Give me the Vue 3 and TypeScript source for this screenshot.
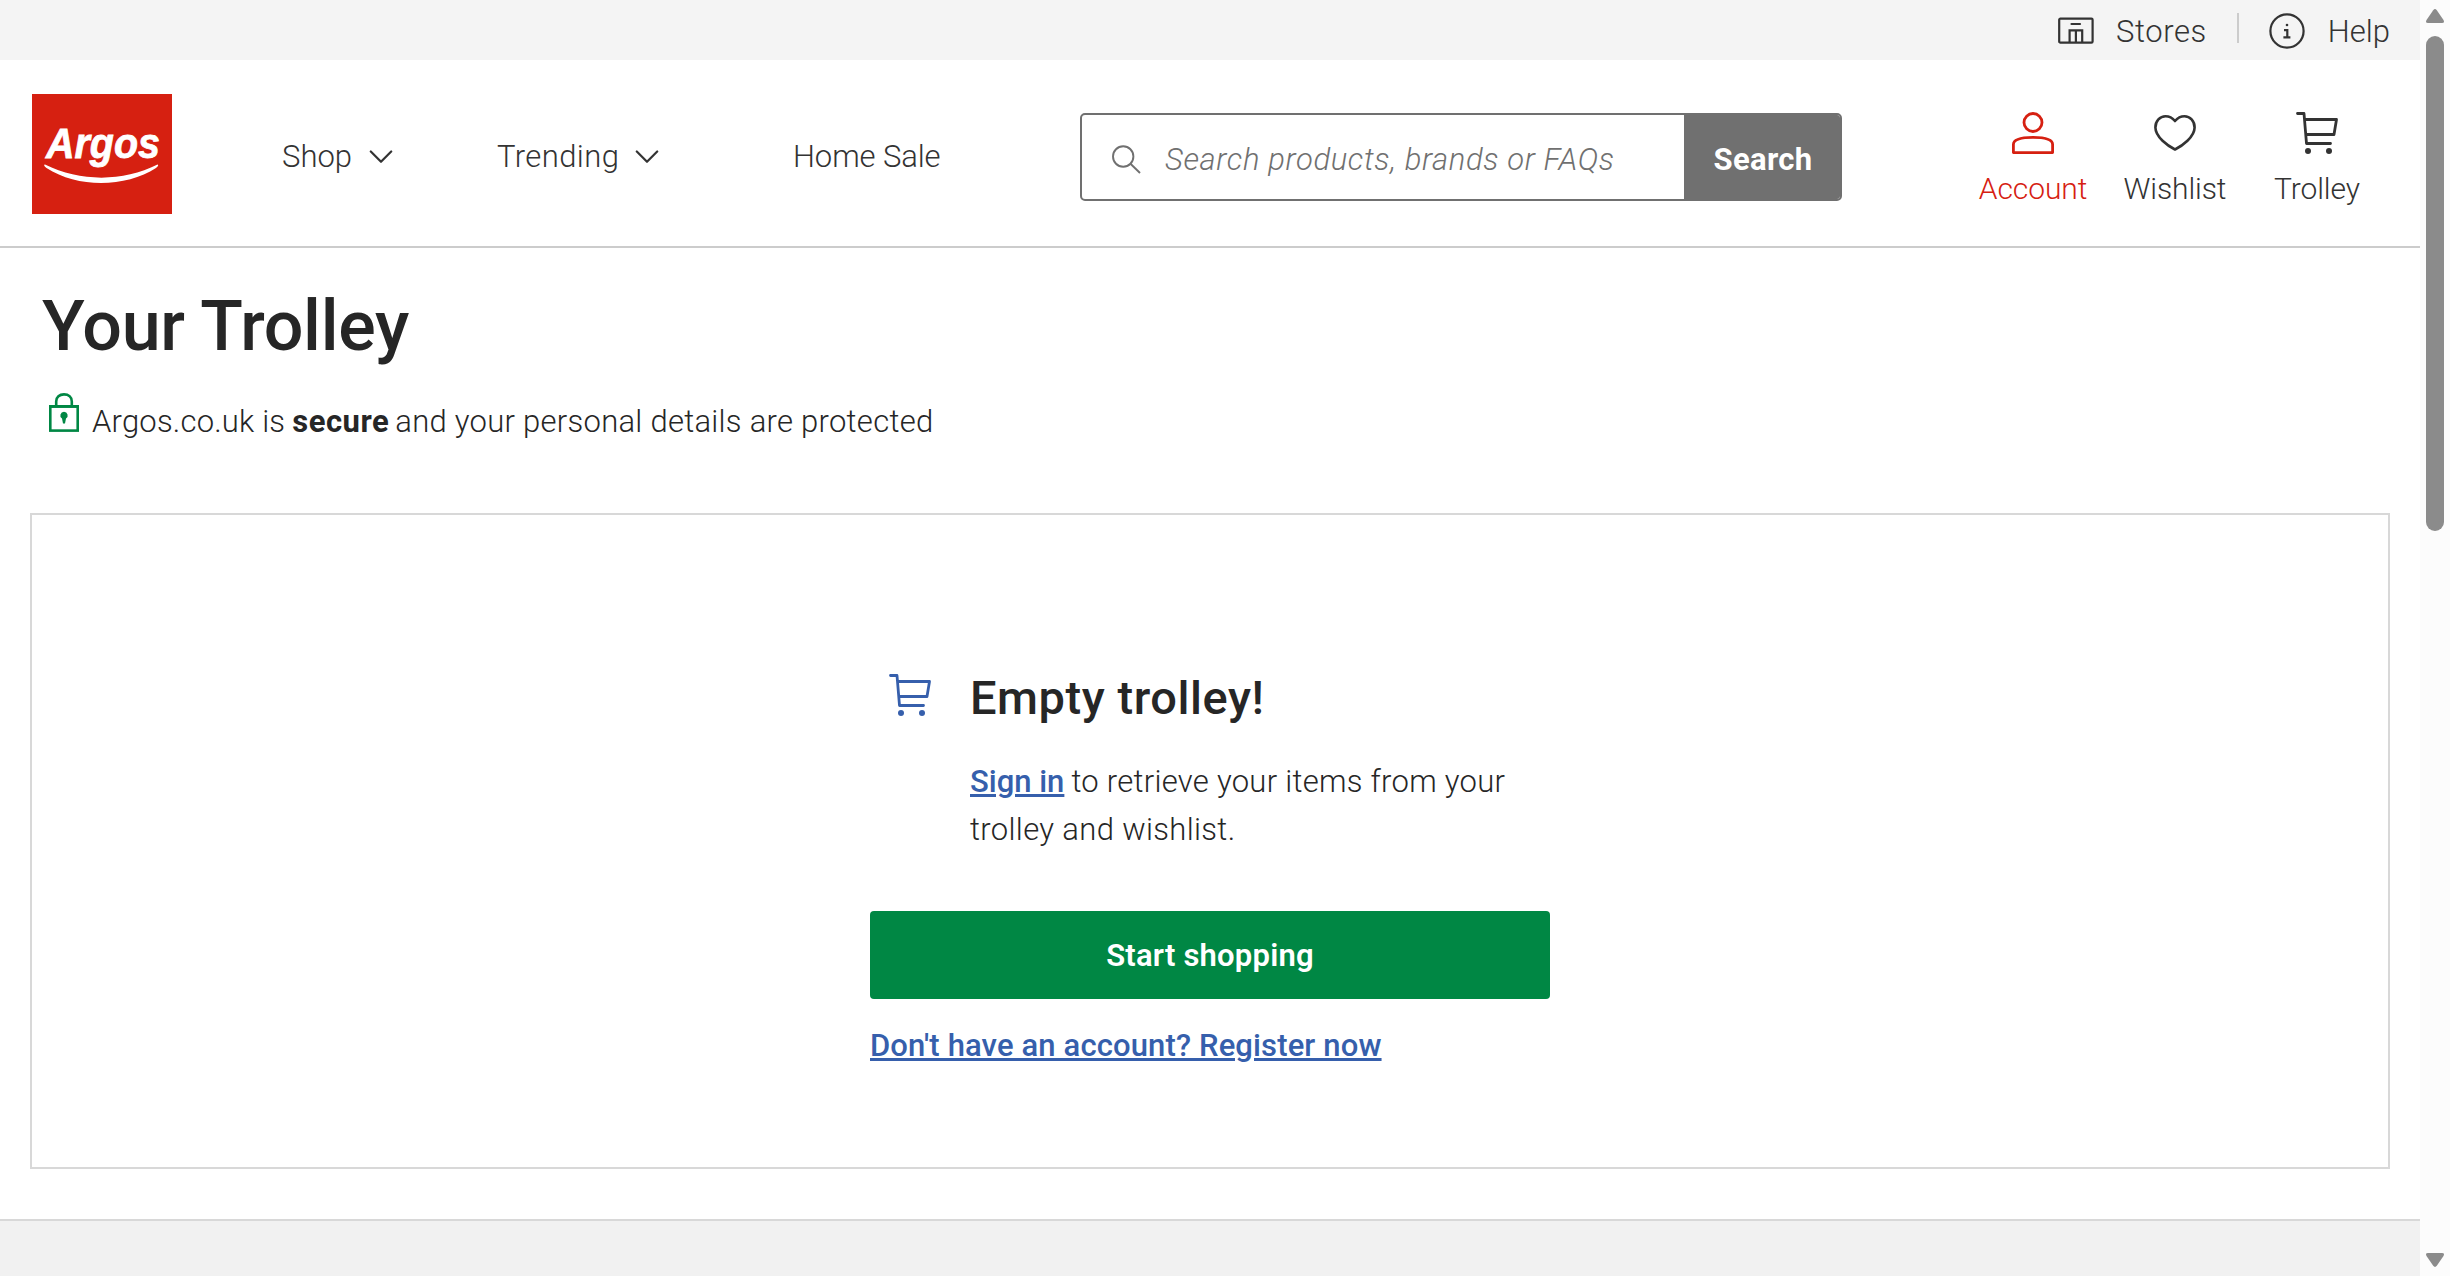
<script setup lang="ts">
interface NavItem { label: string; menu: boolean; cls: string }

const navItems: NavItem[] = [
  { label: 'Shop', menu: true, cls: 'shop' },
  { label: 'Trending', menu: true, cls: 'trending' },
  { label: 'Home Sale', menu: false, cls: 'sale' },
]
</script>

<template>
  <div class="window">
    <div class="page">
      <div class="utility">
        <a class="util stores">
          <svg width="36" height="28" viewBox="0 0 36 28" fill="none" stroke="currentColor" stroke-width="2.2">
            <rect x="1.2" y="1.6" width="33.4" height="24" rx="1.2" />
            <path d="M13.5 7H22" stroke-linecap="round" />
            <path d="M11.6 25V13.4H24.2V25M17.9 13.4V25" />
          </svg>
          <span class="t">Stores</span>
        </a>
        <i class="divider"></i>
        <a class="util help">
          <svg width="36" height="36" viewBox="0 0 36 36" fill="none" stroke="currentColor" stroke-width="2.2">
            <circle cx="18" cy="18" r="16.6" />
            <path d="M15 17.2H18.3V24.2M14.4 24.4H21.4" />
            <circle cx="18" cy="12" r="1.3" fill="currentColor" stroke="none" />
          </svg>
          <span class="t">Help</span>
        </a>
      </div>

      <header class="header">
        <a class="logo">
          <svg width="140" height="120" viewBox="0 0 140 120">
            <rect width="140" height="120" fill="#d62011" />
            <text x="14" y="64" textLength="114" lengthAdjust="spacingAndGlyphs" font-size="43" fill="#fff" stroke="#fff" stroke-width=".8">Argos</text>
            <path d="M13 70.6C48 88 91 88 125.500 70.600C127 71.500 125.500 73 124 74C94 93.500 46 94.500 14.500 74C12 72.500 11.500 70.500 13 70.600Z" fill="#fff" />
          </svg>
        </a>
        <nav class="nav">
          <a v-for="n in navItems" :key="n.label" class="nav-item" :class="n.cls">
            <span class="t">{{ n.label }}</span>
            <svg v-if="n.menu" width="24" height="14" viewBox="0 0 24 14" fill="none" stroke="currentColor" stroke-width="2.2" stroke-linecap="round" stroke-linejoin="round"><path d="M1.800 1.500L12 11.800L22.200 1.500" /></svg>
          </a>
        </nav>
        <div class="search">
          <svg width="30" height="30" viewBox="0 0 30 30" fill="none" stroke="#707070" stroke-width="1.900"><circle cx="11.200" cy="11.500" r="10.200" /><path d="M18.500 18.800L28 28" /></svg>
          <span class="t placeholder">Search products, brands or FAQs</span>
          <button class="search-btn"><span class="t">Search</span></button>
        </div>
        <div class="actions">
          <a class="action account">
            <svg width="42" height="42" viewBox="0 0 42 42" fill="none" stroke="currentColor" stroke-width="2.800" stroke-linejoin="round"><circle cx="21" cy="10.500" r="9" /><path d="M1.400 40.600V32.500C1.400 28.500 7 25.400 21 25.400S40.600 28.500 40.600 32.500V40.600Z" /></svg>
            <span class="t">Account</span>
          </a>
          <a class="action wishlist">
            <svg width="42" height="42" viewBox="0 -3 42 42" fill="none" stroke="currentColor" stroke-width="2.600" stroke-linejoin="round"><path d="M21 34.500C14 31 1.400 22 1.400 12.500C1.400 6 6 1.300 11.500 1.300C15.500 1.300 18.500 3 21 6C23.500 3 26.500 1.300 30.500 1.300C36 1.300 40.600 6 40.600 12.500C40.600 22 28 31 21 34.500Z" /></svg>
            <span class="t">Wishlist</span>
          </a>
          <a class="action trolley">
            <svg width="42" height="42" viewBox="0 0 42 42" fill="none" stroke="currentColor" stroke-width="2.800" stroke-linejoin="round" stroke-linecap="round"><path d="M1.500 1.500H8L10.500 31.500H34.500M8.600 7.500H40.500L38 22.500H9.800" /><g fill="currentColor" stroke="none"><circle cx="12" cy="39" r="3" /><circle cx="33" cy="39" r="3" /></g></svg>
            <span class="t">Trolley</span>
          </a>
        </div>
      </header>

      <main class="main">
        <h1><span class="t">Your Trolley</span></h1>
        <p class="secure">
          <svg width="30" height="39" viewBox="0 0 30 39" fill="none" stroke="#008744" stroke-width="2.600"><path d="M7.200 13V8.500C7.200 4 10.500 1.400 15 1.400S22.800 4 22.800 8.500V13" /><rect x="1.300" y="13.300" width="27.400" height="24.300" /><path d="M0 13.600H30" /><path d="M15 18.800a3.700 3.700 0 0 1 2 6.800l-1 5h-2l-1-5a3.700 3.700 0 0 1 2-6.800Z" fill="#008744" stroke="none" /></svg>
          <span class="t s1">Argos.co.uk is</span><strong class="t s2">secure</strong><span class="t s3">and your personal details are protected</span>
        </p>
        <section class="card">
          <div class="empty">
            <div class="empty-row">
              <svg width="42" height="42" viewBox="0 0 42 42" fill="none" stroke="currentColor" stroke-width="2.800" stroke-linejoin="round" stroke-linecap="round"><path d="M1.500 1.500H8L10.500 31.500H34.500M8.600 7.500H40.500L38 22.500H9.800" /><g fill="currentColor" stroke="none"><circle cx="12" cy="39" r="3" /><circle cx="33" cy="39" r="3" /></g></svg>
              <div class="copy">
                <h2><span class="t">Empty trolley!</span></h2>
                <p><a class="link t">Sign in</a><span class="t c1">to retrieve your items from your</span></p>
                <p><span class="t c2">trolley and wishlist.</span></p>
              </div>
            </div>
            <button class="start"><span class="t">Start shopping</span></button>
            <a class="link register t">Don't have an account? Register now</a>
          </div>
        </section>
      </main>
      <footer class="footer"></footer>
    </div>
    <div class="scrollbar">
      <svg width="18" height="14" viewBox="0 0 18 14" fill="#8b8b8b"><path d="M7.200 1.200Q9-1 10.800 1.200L17.500 11Q19 14 16 14H2Q-1 14 .5 11Z" /></svg>
      <i class="thumb"></i>
      <svg width="18" height="14" viewBox="0 0 18 14" fill="#8b8b8b"><path d="M7.200 12.800Q9 15 10.800 12.800L17.500 3Q19 0 16 0H2Q-1 0 .5 3Z" /></svg>
    </div>
  </div>
</template>

<style>
body { margin: 0; background: #fff; overflow: hidden; }
</style>

<style scoped>
.window { display: flex; width: 2450px; height: 1276px; overflow: hidden; font-family: Roboto, "Liberation Sans", sans-serif; font-size: 31px; font-weight: 300; color: #333; }
.window *, .window { box-sizing: border-box; }
h1, h2, p { margin: 0; }
svg { display: block; flex: none; }
.t { display: block; flex: none; white-space: nowrap; }
.page { flex: none; width: 2420px; display: flex; flex-direction: column; }
.utility { height: 60px; flex: none; background: #f4f4f4; display: flex; justify-content: flex-end; align-items: flex-start; padding: 13px 30px 0 0; }
.util { display: flex; line-height: 37px; }
.stores { letter-spacing: .6px; }
.stores svg { margin: 4px 22px 0 0; }
.divider { width: 2px; height: 30px; margin: 0 30px; background: #ccc; }
.help svg { margin-right: 23px; }
.header { height: 188px; flex: none; border-bottom: 2px solid #ccc; display: flex; align-items: flex-start; }
.logo { margin: 34px 0 0 32px; }
.logo text { font-family: "Liberation Sans", Arial, sans-serif; font-weight: 700; font-style: italic; }
.nav { display: flex; margin: 78px 0 0 110px; line-height: 37px; }
.nav-item { display: flex; }
.nav-item svg { margin: 12px 0 0 auto; }
.shop { width: 111px; }
.trending { width: 162px; margin-left: 104px; letter-spacing: .4px; }
.sale { width: 287px; margin-left: 134px; letter-spacing: -.1px; }
.search { width: 762px; height: 88px; margin-top: 53px; border: 2px solid #707070; border-radius: 5px; display: flex; overflow: hidden; }
.search svg { margin: 30px 23px 0 30px; }
.placeholder { width: 519px; color: #707070; font-style: italic; line-height: 89px; letter-spacing: .62px; }
.search-btn { border: 0; flex: 1; background: #707070; color: #fff; font: 700 31px/89px Roboto, sans-serif; letter-spacing: .3px; padding: 0 0 0 2px; display: flex; justify-content: center; }
.actions { display: flex; margin-left: 120px; padding-top: 52px; }
.action { width: 142px; display: flex; flex-direction: column; align-items: center; font-size: 30px; line-height: 36px; letter-spacing: -.1px; }
.action .t { margin-top: 17px; }
.account { color: #d62011; }
.main { height: 971px; flex: none; padding-left: 30px; color: #262626; }
h1 { font-size: 70px; font-weight: 500; line-height: 84px; letter-spacing: -.3px; padding: 36px 0 0 12px; }
.secure { display: flex; padding: 25px 0 0 19px; line-height: 37px; }
.secure .t { margin-top: 10px; }
.s1 { margin-left: 13px; letter-spacing: .2px; }
.s2 { margin-left: 7px; font-weight: 700; letter-spacing: .5px; }
.s3 { margin-left: 6px; letter-spacing: .27px; }
.card { width: 2360px; height: 656px; margin-top: 73px; border: 2px solid #d8d8d8; }
.empty { width: 680px; margin: 159px auto 0; }
.empty-row { display: flex; padding-left: 19px; height: 237px; color: #365fac; }
.copy { margin-left: 39px; color: #262626; line-height: 48px; }
.copy p { display: flex; }
h2 { font-size: 47px; font-weight: 500; line-height: 48px; letter-spacing: .55px; margin-bottom: 36px; }
.link { color: #365fac; font-weight: 500; text-decoration: underline; text-decoration-thickness: 3px; text-underline-offset: 2px; }
.c1 { margin-left: 7px; letter-spacing: .27px; }
.c2 { letter-spacing: .35px; }
.start { display: flex; justify-content: center; width: 680px; height: 88px; border: 0; border-radius: 4px; background: #008744; color: #fff; font: 600 31px/90px Roboto, sans-serif; letter-spacing: .2px; padding: 0; }
.register { margin-top: 25px; line-height: 44px; letter-spacing: .13px; }
.footer { flex: 1; border-top: 2px solid #d8d8d8; background: #f1f1f1; }
.scrollbar { width: 30px; background: #fcfcfc; padding: 9px 6px; display: flex; flex-direction: column; }
.thumb { width: 18px; height: 495px; margin: 13px 0 auto; border-radius: 9px; background: #8b8b8b; }
</style>
